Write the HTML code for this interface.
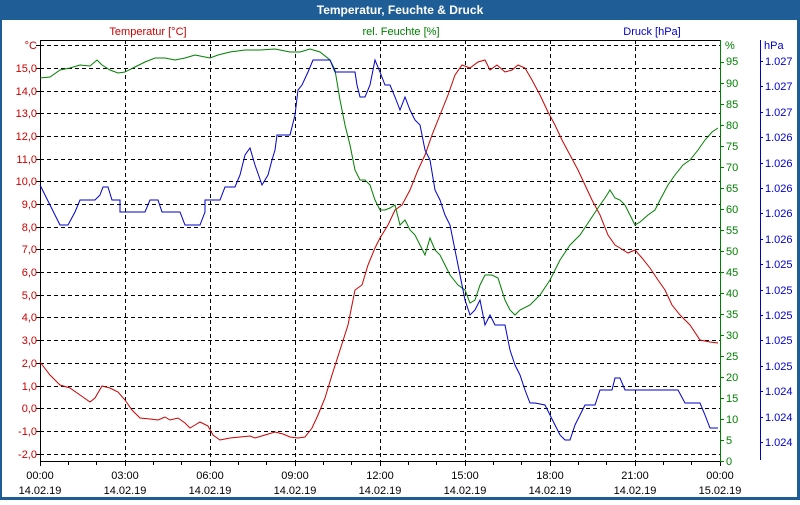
<!DOCTYPE html>
<html><head><meta charset="utf-8"><style>
html,body{margin:0;padding:0;background:#fff;}
body{width:800px;height:500px;overflow:hidden;position:relative;font-family:"Liberation Sans",Tahoma,sans-serif;}
</style></head><body>
<svg width="800" height="500" xmlns="http://www.w3.org/2000/svg" font-family="Liberation Sans, sans-serif" font-size="11">
<rect x="0" y="0" width="800" height="500" fill="#1f5d96"/>
<rect x="2" y="20" width="795" height="477" fill="#fff"/>
<text x="400" y="14" fill="#fff" font-weight="bold" font-size="12" text-anchor="middle">Temperatur, Feuchte &amp; Druck</text>
<text x="148" y="35" fill="#cc0000" text-anchor="middle">Temperatur [°C]</text>
<text x="401" y="35" fill="#008000" text-anchor="middle">rel. Feuchte [%]</text>
<text x="652" y="35" fill="#0000cc" text-anchor="middle">Druck [hPa]</text>
<g stroke="#000" stroke-width="1" stroke-dasharray="4,3" fill="none">
<path d="M40 45.5H720M40 68.5H720M40 91.5H720M40 113.5H720M40 136.5H720M40 159.5H720M40 181.5H720M40 204.5H720M40 227.5H720M40 249.5H720M40 272.5H720M40 295.5H720M40 317.5H720M40 340.5H720M40 363.5H720M40 386.5H720M40 408.5H720M40 431.5H720M40 454.5H720"/>
<path d="M125.5 40V461M210.5 40V461M295.5 40V461M380.5 40V461M465.5 40V461M550.5 40V461M635.5 40V461"/>
</g>
<g stroke="#000" fill="none">
<path d="M40.5 40V466M40 40.5H720M40 461.5H720"/>
<path d="M68.5 461V465M96.5 461V465M153.5 461V465M181.5 461V465M238.5 461V465M266.5 461V465M323.5 461V465M351.5 461V465M408.5 461V465M436.5 461V465M493.5 461V465M521.5 461V465M578.5 461V465M606.5 461V465M663.5 461V465M691.5 461V465M125.5 461V466M210.5 461V466M295.5 461V466M380.5 461V466M465.5 461V466M550.5 461V466M635.5 461V466M720.5 461V466"/>
<path d="M36 45.5H40M36 68.5H40M36 91.5H40M36 113.5H40M36 136.5H40M36 159.5H40M36 181.5H40M36 204.5H40M36 227.5H40M36 249.5H40M36 272.5H40M36 295.5H40M36 317.5H40M36 340.5H40M36 363.5H40M36 386.5H40M36 408.5H40M36 431.5H40M36 454.5H40"/>
</g>
<path d="M720.5 40V461M720 461.5h4M720 440.5h4M720 419.5h4M720 398.5h4M720 377.5h4M720 356.5h4M720 335.5h4M720 314.5h4M720 293.5h4M720 272.5h4M720 251.5h4M720 230.5h4M720 209.5h4M720 188.5h4M720 167.5h4M720 146.5h4M720 125.5h4M720 104.5h4M720 83.5h4M720 62.5h4" stroke="#008000" fill="none"/>
<path d="M760.5 40V460M760 61.5h3M760 86.5h3M760 112.5h3M760 137.5h3M760 163.5h3M760 188.5h3M760 213.5h3M760 239.5h3M760 264.5h3M760 290.5h3M760 315.5h3M760 340.5h3M760 366.5h3M760 391.5h3M760 417.5h3M760 442.5h3" stroke="#0000cc" fill="none"/>
<g fill="#cc0000" text-anchor="end">
<text x="37" y="49">°C</text>
<text x="37" y="72">15,0</text><text x="37" y="95">14,0</text><text x="37" y="117">13,0</text><text x="37" y="140">12,0</text><text x="37" y="163">11,0</text><text x="37" y="185">10,0</text><text x="37" y="208">9,0</text><text x="37" y="231">8,0</text><text x="37" y="253">7,0</text><text x="37" y="276">6,0</text><text x="37" y="299">5,0</text><text x="37" y="321">4,0</text><text x="37" y="344">3,0</text><text x="37" y="367">2,0</text><text x="37" y="390">1,0</text><text x="37" y="412">0,0</text><text x="37" y="435">-1,0</text><text x="37" y="458">-2,0</text>
</g>
<g fill="#008000">
<text x="725" y="49">%</text>
<text x="726" y="65">95</text><text x="726" y="87">90</text><text x="726" y="108">85</text><text x="726" y="129">80</text><text x="726" y="150">75</text><text x="726" y="171">70</text><text x="726" y="192">65</text><text x="726" y="213">60</text><text x="726" y="234">55</text><text x="726" y="255">50</text><text x="726" y="276">45</text><text x="726" y="297">40</text><text x="726" y="318">35</text><text x="726" y="339">30</text><text x="726" y="360">25</text><text x="726" y="381">20</text><text x="726" y="402">15</text><text x="726" y="423">10</text><text x="726" y="444">5</text><text x="726" y="465">0</text>
</g>
<g fill="#0000cc">
<text x="764" y="49">hPa</text>
<text x="765" y="65">1.027</text><text x="765" y="90">1.027</text><text x="765" y="116">1.027</text><text x="765" y="141">1.026</text><text x="765" y="167">1.026</text><text x="765" y="192">1.026</text><text x="765" y="217">1.026</text><text x="765" y="243">1.026</text><text x="765" y="268">1.025</text><text x="765" y="294">1.025</text><text x="765" y="319">1.025</text><text x="765" y="344">1.025</text><text x="765" y="370">1.025</text><text x="765" y="395">1.024</text><text x="765" y="421">1.024</text><text x="765" y="446">1.024</text>
</g>
<g fill="#000" text-anchor="middle">
<text x="40" y="479">00:00</text><text x="125" y="479">03:00</text><text x="210" y="479">06:00</text><text x="295" y="479">09:00</text><text x="380" y="479">12:00</text><text x="465" y="479">15:00</text><text x="550" y="479">18:00</text><text x="635" y="479">21:00</text><text x="720" y="479">00:00</text>
<text x="40" y="494">14.02.19</text><text x="125" y="494">14.02.19</text><text x="210" y="494">14.02.19</text><text x="295" y="494">14.02.19</text><text x="380" y="494">14.02.19</text><text x="465" y="494">14.02.19</text><text x="550" y="494">14.02.19</text><text x="635" y="494">14.02.19</text><text x="720" y="494">15.02.19</text>
</g>
<polyline fill="none" stroke="#cc0000" points="40,362 50,375 60,385 70,388 80,395 90,402 95,398 102,386 110,388 118,392 125,400 132,410 140,418 150,419 158,420 165,417 170,420 178,418 185,423 190,428 195,425 200,422 208,426 213,435 220,440 230,438 240,437 250,436 255,438 265,435 275,432 283,434 290,437 298,438 305,437 312,428 318,415 325,398 332,375 340,350 348,325 355,290 362,285 368,265 375,248 380,238 388,225 395,210 402,205 410,190 418,170 425,155 432,135 440,115 448,95 455,75 462,65 470,68 478,62 485,60 490,70 497,65 505,72 512,70 518,65 525,68 532,80 540,95 548,112 555,125 562,140 570,155 578,170 585,185 592,200 600,215 608,235 615,245 620,248 628,253 635,250 642,258 650,268 658,280 665,290 672,305 680,315 690,325 700,340 710,342 718,343"/>
<polyline fill="none" stroke="#008000" points="40,78 50,77 60,70 70,68 80,65 90,66 97,60 102,65 110,70 118,73 125,72 135,67 145,62 155,58 165,58 175,60 185,58 195,55 205,57 210,58 218,55 230,52 245,50 260,50 275,49 290,52 300,52 310,49 320,52 330,60 335,70 340,100 345,125 350,145 355,170 360,180 365,180 370,185 375,200 380,210 385,210 390,208 395,205 400,225 405,220 410,230 415,235 420,245 425,255 430,238 435,250 440,255 445,265 450,275 458,285 465,290 470,303 475,300 480,285 485,275 492,275 498,278 505,300 510,310 515,315 520,310 530,305 540,295 550,280 560,260 570,245 580,235 590,220 600,205 605,198 610,190 615,198 620,200 625,205 630,215 635,225 640,222 648,215 655,210 660,200 668,185 675,175 683,165 690,160 698,150 705,140 712,132 718,128"/>
<polyline fill="none" stroke="#0000cc" points="40,185 45,195 50,205 55,215 60,225 68,225 75,212 80,200 95,200 100,195 103,187 108,187 112,200 120,200 120,212 145,212 150,200 158,200 162,212 180,212 185,225 200,225 205,212 205,200 220,200 225,187 235,187 240,175 245,155 250,148 255,165 262,185 268,175 272,160 275,150 277,135 290,135 295,115 298,90 302,85 308,72 313,60 330,60 335,72 355,72 357,85 360,97 365,97 370,85 375,60 380,72 385,85 390,85 395,97 400,110 405,97 410,110 415,120 420,125 425,150 430,160 435,190 440,200 445,215 450,225 455,250 460,275 465,300 470,315 475,310 480,300 485,325 490,315 495,325 505,325 510,350 515,365 520,375 525,390 530,403 535,403 545,405 550,415 555,425 560,435 565,440 570,440 575,425 580,415 585,405 595,405 600,390 605,390 612,390 615,378 620,378 625,390 678,390 685,403 700,403 705,415 710,428 718,428"/>
</svg>
</body></html>
